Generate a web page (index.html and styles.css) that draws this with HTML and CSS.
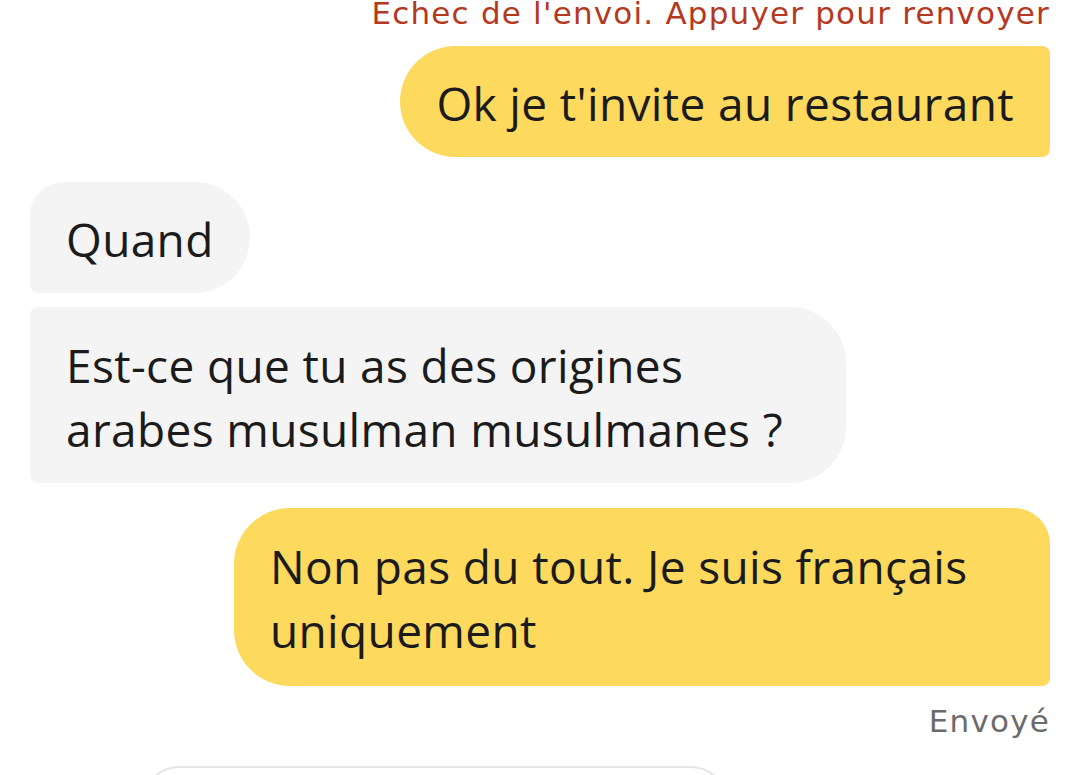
FILE: index.html
```html
<!DOCTYPE html>
<html lang="fr">
<head>
<meta charset="utf-8">
<link rel="stylesheet" href="styles.css">
</head>
<body>
<div class="chat">
  <div class="status status-error">Echec de l'envoi. Appuyer pour renvoyer</div>
  <div class="msg sent single">Ok je t'invite au restaurant</div>
  <div class="msg recv first">Quand</div>
  <div class="msg recv last wide">Est-ce que tu as des origines<br>arabes musulman musulmanes ?</div>
  <div class="msg sent last-sent wide">Non pas du tout. Je suis français<br>uniquement</div>
  <div class="status status-sent">Envoyé</div>
  <div class="composer"></div>
</div>
</body>
</html>
```

FILE: styles.css
```css
html, body {
  margin: 0;
  padding: 0;
  background: #ffffff;
  overflow: hidden;
}

.chat {
  display: flex;
  flex-direction: column;
  width: 1080px;
  height: 775px;
  overflow: hidden;
  padding: 0 30px 0 30px;
  box-sizing: border-box;
  font-family: "Open Sans", Roboto, sans-serif;
  color: #1b1b1b;
}

.status {
  font-family: "DejaVu Sans", sans-serif;
  font-size: 31px;
  line-height: 26px;
  letter-spacing: 1.2px;
  align-self: flex-end;
  white-space: nowrap;
}

.status-error {
  color: #b5391f;
  margin-top: 0;
  margin-bottom: 20px;
}

.status-sent {
  color: #6b6b6b;
  margin-top: 22px;
}

.msg {
  box-sizing: border-box;
  font-size: 46px;
  line-height: 64px;
  letter-spacing: 0.35px;
  padding: 25px 36px 22px 36px;
}

.msg.wide {
  width: 816px;
}

.sent {
  align-self: flex-end;
  background: #fdd95d;
}

.recv {
  align-self: flex-start;
  background: #f4f4f4;
}

.single {
  border-radius: 56px 8px 8px 56px;
  margin-bottom: 25px;
}

.first {
  border-radius: 34px 56px 56px 8px;
  margin-bottom: 14px;
}

.last {
  border-radius: 8px 56px 56px 8px;
  margin-bottom: 25px;
  padding-top: 26px;
}

.last-sent {
  border-radius: 56px 36px 8px 56px;
  padding-top: 26px;
  padding-bottom: 24px;
}

.composer {
  margin-top: 32px;
  margin-left: 110px;
  width: 590px;
  height: 80px;
  flex-shrink: 0;
  border: 2px solid #e6e6e6;
  border-radius: 40px;
  box-sizing: border-box;
}
```
